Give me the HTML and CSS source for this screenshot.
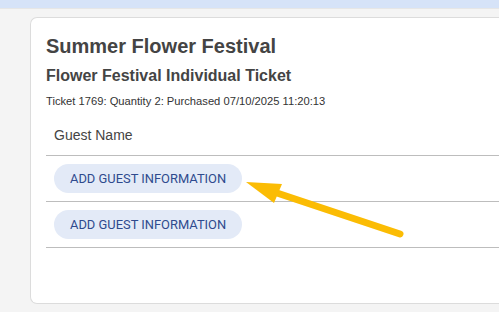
FILE: index.html
```html
<!DOCTYPE html>
<html lang="en">
<head>
    <meta charset="UTF-8">
    <meta name="viewport" content="width=device-width, initial-scale=1.0">
    <title>Ticket - Guests</title>
    <link rel="stylesheet" href="styles.css">
</head>
<body>
    <!-- Top bar -->
    <div class="topbar"></div>

    <div class="page">
        <div class="card">
            <h1>Summer Flower Festival</h1>
            <h2>Flower Festival Individual Ticket</h2>
            <p class="ticket-info">Ticket 1769: Quantity 2: Purchased 07/10/2025 11:20:13</p>

            <table class="guests">
                <thead>
                    <tr><th>Guest Name</th></tr>
                </thead>
                <tbody>
                    <tr><td><button type="button" class="guest-button">Add Guest Information</button></td></tr>
                    <tr><td><button type="button" class="guest-button">Add Guest Information</button></td></tr>
                </tbody>
            </table>
        </div>
    </div>

    <!-- Annotation arrow -->
    <svg class="arrow" width="499" height="312" viewBox="0 0 499 312">
        <line x1="400" y1="234" x2="268" y2="190" stroke="#fbbc04" stroke-width="7" stroke-linecap="round"/>
        <polygon points="246,182 282,184 274,203" fill="#fbbc04"/>
    </svg>
</body>
</html>
```

FILE: styles.css
```css
* { margin: 0; padding: 0; box-sizing: border-box; }
body { font-family: "Liberation Sans", Arial, sans-serif; background-color: #f4f4f4; color: #444; overflow: hidden; }
.topbar { height: 9px; background-color: #d6e3f8; border-bottom: 1px solid #e6e6e6; }
.page { padding: 8px 0 0 30px; }
.card { background-color: #fff; border: 1px solid #dcdcdc; border-right: none; border-radius: 7px 0 0 7px; padding: 16px 0 56px 15px; height: 287px; }
h1 { font-size: 20px; line-height: 24px; font-weight: bold; color: #444; margin-bottom: 8px; }
h2 { font-size: 16px; line-height: 20px; font-weight: bold; color: #444; margin-bottom: 8px; }
.ticket-info { font-size: 11.2px; line-height: 14px; color: #333; margin-bottom: 7px; }
.guests { width: 100%; border-collapse: collapse; }
.guests th { text-align: left; font-weight: normal; font-size: 14px; padding: 12px 8px 12px; border-bottom: 1px solid #bdbdbd; color: #444; }
.guests td { padding: 8px 8px 8px; border-bottom: 1px solid #bdbdbd; }
.guest-button { font-family: Roboto, "Liberation Sans", sans-serif; font-size: 12.9px; text-transform: uppercase; color: #2f4a8e; background-color: #e3eaf7; border: none; border-radius: 15px; height: 29px; padding: 0 16px; cursor: pointer; }
.guest-button:hover { background-color: #d6e0f3; }
.arrow { position: absolute; top: 0; left: 0; pointer-events: none; }
```
